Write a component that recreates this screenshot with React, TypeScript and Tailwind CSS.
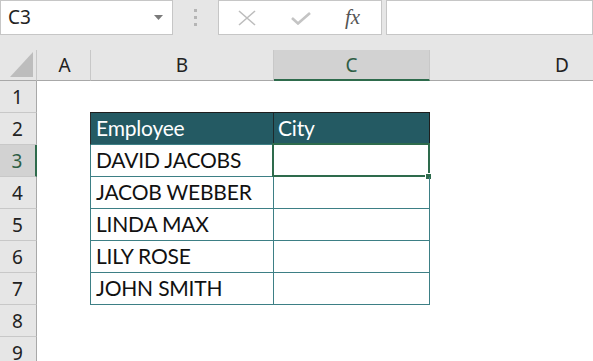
import React from "react";

const names = ["DAVID JACOBS", "JACOB WEBBER", "LINDA MAX", "LILY ROSE", "JOHN SMITH"];

function RowHeader({ n, active }: { n: number; active?: boolean }) {
  return (
    <div
      className={
        active
          ? "w-[37px] h-full shrink-0 bg-[#d2d2d2] border-b border-b-[#c8c8c8] border-r-2 border-r-[#2e6b4c] flex items-center justify-center text-[#2e5e45]"
          : "w-[37px] h-full shrink-0 bg-[#e6e6e6] border-b border-b-[#c8c8c8] border-r border-r-[#a8a8a8] flex items-center justify-center text-[#222]"
      }
      style={{ fontFamily: "'Noto Sans', 'Open Sans', sans-serif", fontSize: 19 }}
    >
      <span className="pr-[1px] pt-[1px]">{n}</span>
    </div>
  );
}

export default function App() {
  const cellFont = { fontFamily: "Lato, 'Open Sans', sans-serif", fontSize: 21, letterSpacing: "-0.2px" };
  const rows = [1, 2, 3, 4, 5, 6, 7, 8, 9];
  return (
    <div className="w-[593px] h-[361px] overflow-hidden bg-white flex flex-col">
      {/* Formula bar */}
      <div className="h-[50px] shrink-0 bg-[#e6e6e6] flex items-start">
        <div className="w-[173px] h-[35px] bg-white border border-[#c6c6c6] flex items-center justify-between pl-[7px] pr-[9px]">
          <span style={{ fontFamily: "'Noto Sans', sans-serif", fontSize: 19 }} className="text-[#222] leading-none">
            C3
          </span>
          <svg width="9" height="5" viewBox="0 0 9 5">
            <path d="M0 0 L9 0 L4.5 5 Z" fill="#7a7a7a" />
          </svg>
        </div>
        <div className="w-[45px] h-[35px] flex flex-col items-center justify-center gap-[4px]">
          <div className="w-[3px] h-[3px] bg-[#b5b5b5]" />
          <div className="w-[3px] h-[3px] bg-[#b5b5b5]" />
          <div className="w-[3px] h-[3px] bg-[#b5b5b5]" />
        </div>
        <div className="w-[164px] h-[35px] bg-white border border-[#c6c6c6] flex items-center pl-[18px]">
          <svg width="20" height="16" viewBox="0 0 20 16">
            <path d="M2 1 L18 15 M18 1 L2 15" stroke="#bdbdbd" strokeWidth="1.6" />
          </svg>
          <svg className="ml-[34px] mt-[2px]" width="20" height="13" viewBox="0 0 20 13">
            <path d="M1 6 L7 11.5 L19 1" stroke="#c4c4c4" strokeWidth="2.6" fill="none" />
          </svg>
          <span
            className="ml-[34px] text-[#555] italic leading-none"
            style={{ fontFamily: "'Liberation Serif', serif", fontSize: 21 }}
          >
            fx
          </span>
        </div>
        <div className="w-[4px]" />
        <div className="flex-1 h-[35px] bg-white border border-[#c6c6c6]" />
      </div>

      {/* Column headers */}
      <div
        className="h-[31px] shrink-0 flex bg-[#e6e6e6] text-[#222]"
        style={{ fontFamily: "'Noto Sans', 'Open Sans', sans-serif", fontSize: 19 }}
      >
        <div className="w-[37px] h-full border-r border-r-[#c8c8c8] border-b border-b-[#a8a8a8] relative">
          <svg className="absolute left-[10px] top-[2px]" width="24" height="26" viewBox="0 0 24 26">
            <path d="M0 25 L23 25 L23 0 Z" fill="#bdbdbd" />
          </svg>
        </div>
        <div className="w-[54px] h-full border-r border-r-[#c8c8c8] border-b border-b-[#a8a8a8] flex items-center justify-center pl-[2px]">
          A
        </div>
        <div className="w-[183px] h-full border-r border-r-[#c8c8c8] border-b border-b-[#a8a8a8] flex items-center justify-center">
          B
        </div>
        <div className="w-[156px] h-full bg-[#d2d2d2] border-r border-r-[#c8c8c8] border-b-2 border-b-[#2e6b4c] flex items-center justify-center text-[#2e5e45] pt-[1px]">
          C
        </div>
        <div className="flex-1 h-full border-b border-b-[#a8a8a8] flex items-center justify-start pl-[125px]">
          D
        </div>
      </div>

      {/* Rows */}
      {rows.map((r) => {
        const inTable = r >= 2 && r <= 7;
        const isHead = r === 2;
        const nameIdx = r - 3;
        return (
          <div key={r} className="h-[32px] shrink-0 flex">
            <RowHeader n={r} active={r === 3} />
            <div className="w-[53px] h-full" />
            {r === 1 ? (
              <>
                <div className="w-[184px] h-full border-b border-b-[#1e1e1e]" />
                <div className="w-[156px] h-full border-b border-b-[#1e1e1e]" />
              </>
            ) : isHead ? (
              <>
                <div
                  className="w-[184px] h-full bg-[#245a63] border-l border-l-[#2b2b2b] border-r border-r-[#1e2a2c] border-b border-b-[#3d7f85] text-white flex items-end pl-[5px] pb-[1px]"
                  style={cellFont}
                >
                  Employee
                </div>
                <div
                  className="w-[156px] h-full bg-[#245a63] border-r border-r-[#1e1e1e] border-b border-b-[#3d7f85] text-white flex items-end pl-[4px] pb-[1px]"
                  style={cellFont}
                >
                  City
                </div>
              </>
            ) : inTable ? (
              <>
                <div
                  className="w-[184px] h-full border-l border-l-[#3d7f85] border-r border-r-[#3d7f85] border-b border-b-[#3d7f85] text-[#111] flex items-end pl-[5px] pb-[1px]"
                  style={cellFont}
                >
                  {names[nameIdx]}
                </div>
                <div className="w-[156px] h-full border-r border-r-[#3d7f85] border-b border-b-[#3d7f85] relative">
                  {r === 3 && (
                    <>
                      <div className="absolute left-[-2px] top-[-2px] right-[-1px] bottom-[-1px] border-2 border-[#2e6b4c]" />
                      <div className="absolute right-[-3px] bottom-[-4px] w-[7px] h-[7px] bg-[#2e6b4c] border border-white" />
                    </>
                  )}
                </div>
              </>
            ) : (
              <>
                <div className="w-[184px] h-full" />
                <div className="w-[156px] h-full" />
              </>
            )}
            <div className="flex-1 h-full" />
          </div>
        );
      })}
    </div>
  );
}
